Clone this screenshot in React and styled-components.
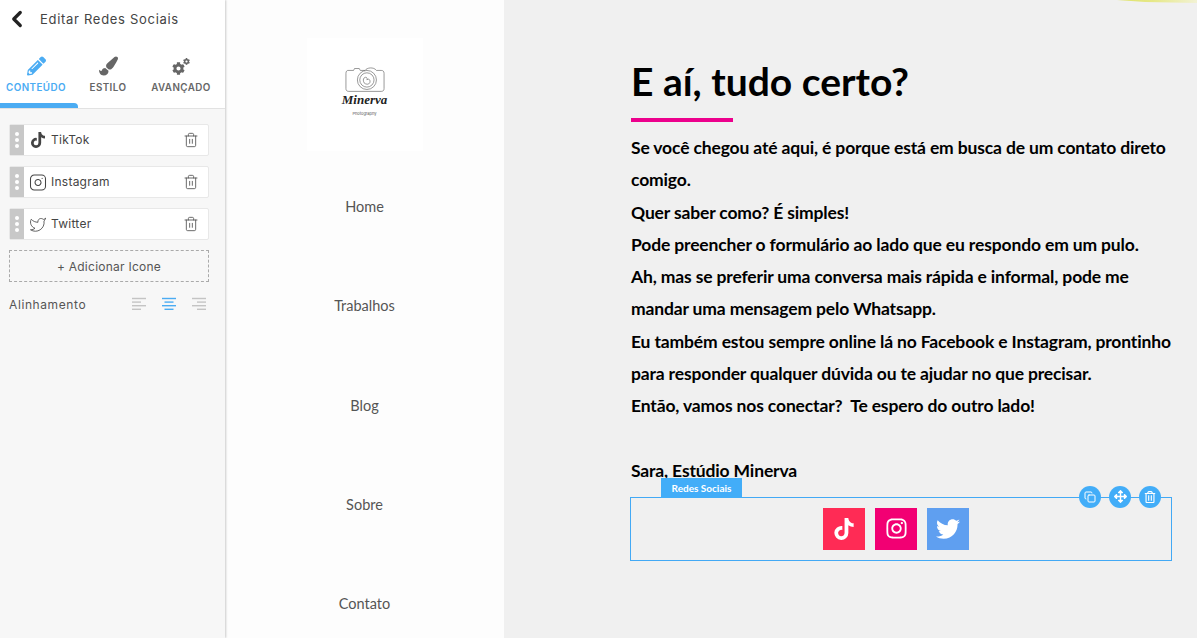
import styled, { createGlobalStyle } from "styled-components"
import { ChevronLeft, Instagram, Twitter, Trash2, Copy } from "lucide-react"
import { FaCog, FaPaintBrush, FaPencilAlt, FaTiktok, FaInstagram, FaTwitter, FaArrowsAlt, FaRegTrashAlt } from "react-icons/fa"

const GlobalStyle = createGlobalStyle`
  html, body { margin: 0; padding: 0; background: #f0f0f0; }
  * { box-sizing: border-box; }
`

const Page = styled.div`
  position: relative;
  display: flex;
  width: 1197px;
  height: 638px;
  overflow: hidden;
  font-family: "Inter", "Liberation Sans", sans-serif;
`

const Sidebar = styled.aside`
  position: relative;
  z-index: 2;
  width: 225px;
  flex-shrink: 0;
  background: #f7f7f7;
  box-shadow: 1px 0 2px rgba(0, 0, 0, 0.2);
`

const SideTop = styled.div`
  background: #fff;
  height: 109px;
  border-bottom: 1px solid #e2e2e2;
`

const SideHeader = styled.div`
  display: flex;
  align-items: center;
  height: 38px;
  padding-left: 4px;
  gap: 10px;
  font-size: 13px;
  letter-spacing: 0.7px;
  color: #444;
`

const Tabs = styled.div`
  display: grid;
  grid-template-columns: 72px 72px 74px;
  height: 70px;
`

const Tab = styled.div`
  position: relative;
  display: flex;
  flex-direction: column;
  align-items: center;
  padding-top: 18px;
  gap: 6px;
  font-size: 9.8px;
  font-weight: 600;
  letter-spacing: 0.45px;
  color: ${(p) => (p.$active ? "#4bacf3" : "#666")};

  svg {
    height: 20px;
  }

  ${(p) =>
    p.$active &&
    `&::after {
      content: "";
      position: absolute;
      left: 0;
      bottom: 0;
      width: 78px;
      height: 5px;
      background: #4bacf3;
      border-radius: 0 4px 0 0;
    }`}
`

const GearIcon = styled.span`
  position: relative;
  display: block;
  width: 20px;
  height: 20px;

  svg:first-child {
    position: absolute;
    left: 1px;
    bottom: 1px;
    width: 13px;
    height: 13px;
  }
  svg:last-child {
    position: absolute;
    right: 1px;
    top: 2px;
    width: 7px;
    height: 7px;
  }
`

const SideBody = styled.div`
  display: flex;
  flex-direction: column;
  padding: 15px 16px 0 9px;
  gap: 10px;
`

const Item = styled.div`
  display: flex;
  align-items: center;
  height: 32px;
  background: #fff;
  border: 1px solid #e8e8e8;
  border-radius: 2px;
  font-size: 12px;
  letter-spacing: 0.25px;
  color: #444;
`

const Handle = styled.div`
  display: flex;
  flex-direction: column;
  align-items: center;
  justify-content: center;
  gap: 2px;
  width: 14px;
  height: 30px;
  background: #c8c8c8;
  margin-right: 5px;

  span {
    width: 4px;
    height: 4px;
    border-radius: 50%;
    background: #fff;
  }
`

const ItemIcon = styled.span`
  display: flex;
  justify-content: center;
  width: 18px;
  margin-right: 4px;
  color: #444;
`

const ItemLabel = styled.span`
  flex: 1;
  margin-top: -1px;
`

const TrashButton = styled.span`
  display: flex;
  margin-right: 9px;
  color: #555;
`

const AddButton = styled.div`
  display: flex;
  align-items: center;
  justify-content: center;
  height: 32px;
  border: 1px dashed #aaa;
  font-size: 12px;
  letter-spacing: 0.25px;
  color: #555;
`

const AlignRow = styled.div`
  display: flex;
  align-items: center;
  height: 24px;
  font-size: 12px;
  letter-spacing: 0.6px;
  color: #555;
`

const AlignLabel = styled.span`
  flex: 1;
`

const AlignGroup = styled.div`
  display: flex;
  gap: 16px;
  margin-right: 3px;
`

const NavColumn = styled.nav`
  width: 279px;
  flex-shrink: 0;
  background: #fdfdfd;
  display: flex;
  flex-direction: column;
  align-items: center;
`

const LogoBox = styled.div`
  display: flex;
  flex-direction: column;
  align-items: center;
  flex-shrink: 0;
  width: 116px;
  height: 113px;
  margin-top: 38px;
  margin-bottom: 6px;
  padding-top: 26px;
  background: #fff;
`

const LogoName = styled.span`
  margin-top: -1px;
  font-family: "Liberation Serif", serif;
  font-style: italic;
  font-weight: 700;
  font-size: 13px;
  line-height: 14px;
  color: #222;
`

const LogoSub = styled.span`
  margin-top: 4px;
  font-size: 4px;
  line-height: 6px;
  color: #555;
`

const NavLink = styled.a`
  display: flex;
  align-items: center;
  justify-content: center;
  flex-shrink: 0;
  height: 99.25px;
  font-family: "Lato", sans-serif;
  font-size: 14.5px;
  color: #555;
`

const Main = styled.main`
  position: relative;
  flex: 1;
  background: #f0f0f0;
  padding: 56px 25px 0 127px;
  font-family: "Lato", sans-serif;
  color: #000;
`

const Glow = styled.div`
  position: absolute;
  top: 0;
  right: 0;
  width: 80px;
  height: 3px;
  background: linear-gradient(90deg, #dfe36a, #e6e888 45%, #f2f2d4);
  clip-path: polygon(0 0, 100% 0, 100% 100%, 35% 70%);
`

const Heading = styled.h1`
  margin: 0;
  font-size: 39px;
  line-height: 50px;
  font-weight: 700;
`

const Rule = styled.div`
  width: 102px;
  height: 4px;
  margin-top: 12px;
  background: #ec008c;
`

const Body = styled.p`
  margin: 10px 0 0;
  font-size: 17.5px;
  font-weight: 700;
  letter-spacing: -0.15px;
  line-height: 32.25px;
  white-space: pre;
`

const SocialBox = styled.div`
  position: relative;
  display: flex;
  justify-content: center;
  gap: 10px;
  width: 542px;
  height: 64px;
  margin: 10px 0 0 -1px;
  padding: 10px 10px 0 0;
  border: 1px solid #42a9f5;
`

const SocialTag = styled.div`
  position: absolute;
  left: 30px;
  top: -20px;
  display: flex;
  align-items: center;
  justify-content: center;
  width: 81px;
  height: 20px;
  background: #42adf8;
  color: #fff;
  font-size: 10px;
  font-weight: 700;
`

const SocialIcon = styled.a`
  display: flex;
  align-items: center;
  justify-content: center;
  width: 42px;
  height: 42px;
  color: #fff;
  background: ${(p) => p.$bg};
`

const BoxActions = styled.div`
  position: absolute;
  top: -12px;
  right: 10px;
  display: flex;
  gap: 8px;
`

const RoundAction = styled.span`
  display: flex;
  align-items: center;
  justify-content: center;
  width: 22px;
  height: 22px;
  border-radius: 50%;
  background: #42adf8;
  color: #fff;
`

function AlignIcon({ type, color }) {
  const rows = [14, 9, 14, 9]
  return (
    <svg width="14" height="14" viewBox="0 0 14 14" stroke={color} strokeWidth="1.4">
      {rows.map((width, i) => {
        let x = 0
        if (type === "center") x = (14 - width) / 2
        if (type === "right") x = 14 - width
        return <line key={i} x1={x} x2={x + width} y1={1.5 + i * 3.6} y2={1.5 + i * 3.6} />
      })}
    </svg>
  )
}

function CameraLogo() {
  return (
    <svg width="40" height="30" viewBox="0 0 42 30" fill="none" stroke="#666" strokeWidth="0.7">
      <path d="M3 6h6l1-2h5l1 2h5c2-3 9-4 12 0h5c2 0 3 1 3 3v16c0 2-1 3-3 3H4c-2 0-3-1-3-3V9c0-2 1-3 2-3z" />
      <circle cx="23" cy="16" r="10" />
      <circle cx="23" cy="16" r="7.5" />
      <path d="M20 14c2-2 4 0 3 2 2-2 4 0 3 3-1 2-4 2-6 0-1-2-1-4 0-5z" />
    </svg>
  )
}

const items = [
  { name: "TikTok", icon: <FaTiktok size={16} /> },
  { name: "Instagram", icon: <Instagram size={19} strokeWidth={1.4} /> },
  { name: "Twitter", icon: <Twitter size={19} strokeWidth={1.1} /> },
]

const links = ["Home", "Trabalhos", "Blog", "Sobre", "Contato"]

const text = `Se você chegou até aqui, é porque está em busca de um contato direto
comigo.
Quer saber como? É simples!
Pode preencher o formulário ao lado que eu respondo em um pulo.
Ah, mas se preferir uma conversa mais rápida e informal, pode me
mandar uma mensagem pelo Whatsapp.
Eu também estou sempre online lá no Facebook e Instagram, prontinho
para responder qualquer dúvida ou te ajudar no que precisar.
Então, vamos nos conectar?  Te espero do outro lado!

Sara, Estúdio Minerva`

export default function App() {
  return (
    <Page>
      <GlobalStyle />
      <Sidebar>
        <SideTop>
          <SideHeader>
            <ChevronLeft size={26} strokeWidth={3} color="#222" />
            Editar Redes Sociais
          </SideHeader>
          <Tabs>
            <Tab $active>
              <FaPencilAlt size={19} />
              CONTEÚDO
            </Tab>
            <Tab>
              <FaPaintBrush size={19} />
              ESTILO
            </Tab>
            <Tab>
              <GearIcon>
                <FaCog />
                <FaCog />
              </GearIcon>
              AVANÇADO
            </Tab>
          </Tabs>
        </SideTop>
        <SideBody>
          {items.map((item) => (
            <Item key={item.name}>
              <Handle>
                <span />
                <span />
                <span />
              </Handle>
              <ItemIcon>{item.icon}</ItemIcon>
              <ItemLabel>{item.name}</ItemLabel>
              <TrashButton>
                <Trash2 size={16} strokeWidth={1.3} />
              </TrashButton>
            </Item>
          ))}
          <AddButton>+ Adicionar Icone</AddButton>
          <AlignRow>
            <AlignLabel>Alinhamento</AlignLabel>
            <AlignGroup>
              <AlignIcon type="left" color="#c4c4c4" />
              <AlignIcon type="center" color="#4bacf3" />
              <AlignIcon type="right" color="#c4c4c4" />
            </AlignGroup>
          </AlignRow>
        </SideBody>
      </Sidebar>
      <NavColumn>
        <LogoBox>
          <CameraLogo />
          <LogoName>Minerva</LogoName>
          <LogoSub>Photography</LogoSub>
        </LogoBox>
        {links.map((link) => (
          <NavLink key={link}>{link}</NavLink>
        ))}
      </NavColumn>
      <Main>
        <Glow />
        <Heading>E aí, tudo certo?</Heading>
        <Rule />
        <Body>{text}</Body>
        <SocialBox>
          <SocialTag>Redes Sociais</SocialTag>
          <SocialIcon $bg="#ff2b55">
            <FaTiktok size={22} />
          </SocialIcon>
          <SocialIcon $bg="#f20073">
            <FaInstagram size={23} />
          </SocialIcon>
          <SocialIcon $bg="#5f9ff0">
            <FaTwitter size={24} />
          </SocialIcon>
          <BoxActions>
            <RoundAction>
              <Copy size={12} />
            </RoundAction>
            <RoundAction>
              <FaArrowsAlt size={13} />
            </RoundAction>
            <RoundAction>
              <FaRegTrashAlt size={12} />
            </RoundAction>
          </BoxActions>
        </SocialBox>
      </Main>
    </Page>
  )
}
